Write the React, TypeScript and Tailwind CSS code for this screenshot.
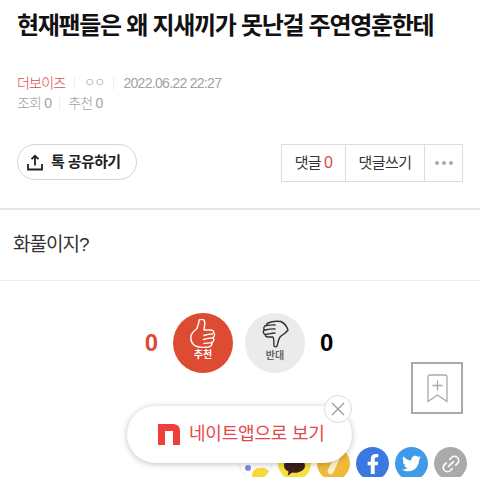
import React from 'react';
import { FaFacebookF, FaTwitter } from 'react-icons/fa';
import { FiLink2 } from 'react-icons/fi';

const font = { fontFamily: '"Liberation Sans", "Noto Sans CJK KR", sans-serif' };

function ShareIcon() {
  return (
    <svg width="16" height="17" viewBox="0 0 16 17" fill="none" stroke="#222" strokeWidth="1.8">
      <path d="M8 11.5V2M4.5 5.2 8 1.8l3.5 3.4M1 10v5.5h14V10" />
    </svg>
  );
}

function ThumbUp() {
  return (
    <svg width="26" height="30" viewBox="0 0 26 30" fill="none" stroke="#fff" strokeWidth="1.4" strokeLinejoin="round" strokeLinecap="round">
      <path d="M9 3C8 5 8 8 6.500 10 4 12 1.500 14 1 17c-.5 4 1 8 4.500 10 3 1.500 9 1.500 13 1 3-.5 4-3 3-4.500 2.500-.5 3-3.500 1.500-5 2-1 2-4 .5-5 .5-1.500-1-2.500-3-2.500H14c0-3 1.500-6 .5-9-.5-2-4.500-2.500-5.500-.5z" />
      <path d="M14 16.500c3-1 6-1.500 8.500-1.500M13.500 20.500c3-1 6-1.500 9.500-1.500M14 24.500c3-.5 5.500-1 8-.5" />
    </svg>
  );
}

function ThumbDown() {
  return (
    <svg width="27" height="28" viewBox="0 0 27 28" fill="none" stroke="#333" strokeWidth="1.4" strokeLinejoin="round" strokeLinecap="round">
      <path d="M6 3c4-2 9-2 13-1.500 3 1.500 6 5.500 7 8.500-2 3-6 5-8 7-1.500 2-2 6-3 9-1 1-2.500 1-3 0-.5-3 .5-6-1-9H6c-2 0-3-1-2.500-2.500C1 14 .5 11 2.500 10 1 8.500 2 5.500 4.500 5.500 4.500 4.500 5 3.500 6 3z" />
      <path d="M4.500 5.500c3-.5 6-1 8.500-.5M2.500 10c3-.5 7-1.500 10.500-1M4 14.500c3-.5 6-1.500 9-1.500" />
    </svg>
  );
}

export default function App() {
  return (
    <div className="relative w-[480px] h-[477px] overflow-hidden bg-white" style={font}>
      <h1 className="pl-[17px] pt-[10px] h-[73px] text-[24px] leading-[32px] font-bold tracking-[-1.3px] text-[#111] whitespace-nowrap">
        현재팬들은 왜 지새끼가 못난걸 주연영훈한테
      </h1>

      <div className="pl-[17px] text-[14px] leading-[20px] tracking-[-0.8px] text-[#a3a3a3] font-light">
        <div className="flex items-center">
          <span className="text-[#dd4b4b]">더보이즈</span>
          <span className="w-px h-[13px] bg-[#eee] mx-[9px]" />
          <span className="text-[12px] tracking-[-1px]">ㅇㅇ</span>
          <span className="w-px h-[13px] bg-[#eee] mx-[9px]" />
          <span className="tracking-[-0.7px]">2022.06.22 22:27</span>
        </div>
        <div className="flex items-center">
          <span>조회 0</span>
          <span className="w-px h-[13px] bg-[#eee] mx-[8px]" />
          <span>추천 0</span>
        </div>
      </div>

      <div className="flex justify-between items-start px-[17px] mt-[31px] h-[64px]">
        <button className="flex items-center gap-[8px] w-[120px] h-[36px] pl-[9px] rounded-full border border-[#d4d4d4] text-[15px] font-bold tracking-[-0.6px] text-[#222]">
          <ShareIcon />
          톡 공유하기
        </button>
        <div className="flex h-[38px] border border-[#ddd] text-[15px] tracking-[-0.6px] text-[#333]">
          <div className="w-[64px] flex items-center justify-center gap-[3px] border-r border-[#ddd]">
            댓글 <span className="text-[#dd4b4b] text-[16px]">0</span>
          </div>
          <div className="w-[79px] flex items-center justify-center border-r border-[#ddd]">댓글쓰기</div>
          <div className="w-[37px] flex items-center justify-center gap-[3px]">
            <span className="w-[4px] h-[4px] rounded-full bg-[#aaa]" />
            <span className="w-[4px] h-[4px] rounded-full bg-[#aaa]" />
            <span className="w-[4px] h-[4px] rounded-full bg-[#aaa]" />
          </div>
        </div>
      </div>

      <div className="h-[73px] border-t-2 border-b border-t-[#e6e6e6] border-b-[#eee] pl-[13px] pt-[21px] text-[19px] leading-[28px] tracking-[-1px] text-[#333]">
        화풀이지?
      </div>

      <div className="flex items-center justify-center mt-[32px] pr-[2px] h-[60px] text-[24px] font-bold">
        <span className="text-[#dd4b32] mr-[15px]">0</span>
        <div className="w-[60px] h-[60px] rounded-full bg-[#dd4b32] flex flex-col items-center justify-start pt-[6px] text-white">
          <ThumbUp />
          <span className="text-[10px] leading-[14px] font-bold -mt-[1px]">추천</span>
        </div>
        <div className="w-[60px] h-[60px] ml-[12px] rounded-full bg-[#ebebeb] flex flex-col items-center justify-start pt-[7px] text-[#666]">
          <ThumbDown />
          <span className="text-[10px] leading-[14px] font-bold mt-[1px]">반대</span>
        </div>
        <span className="text-black ml-[15px]">0</span>
      </div>

      <div className="flex justify-end pr-[17px] -mt-[11px]">
        <div className="w-[52px] h-[52px] border-2 border-[#aaa] flex items-center justify-center">
          <svg width="21" height="29" viewBox="0 0 21 29" fill="none" stroke="#aaa" strokeWidth="1.3">
            <path d="M1 2.500Q1 1 2.500 1h16Q20 1 20 2.500V27.500L10.500 21 1 27.500Z" />
            <path d="M10.500 6.500v10M5.500 11.500h10" />
          </svg>
        </div>
      </div>

      <div className="flex justify-end gap-[6px] pr-[13px] mt-[33px]">
        <span className="relative w-[33px] h-[33px] rounded-full bg-white border border-[#eee] overflow-hidden">
          <span className="absolute left-[12px] top-[20px] w-[18px] h-[14px] rounded-full bg-[#f7d936]" />
          <span className="absolute left-[5px] top-[17px] w-[6px] h-[6px] rounded-full bg-[#7c8fd8]" />
        </span>
        <span className="relative w-[33px] h-[33px] rounded-full bg-[#f5e03c] flex items-center justify-center">
          <svg width="21" height="18" viewBox="0 0 23 19" fill="#3c1e1e" className="mt-[7px]">
            <path d="M11.500 0C5 0 0 3.500 0 8c0 3 2 5 5 6.500L4 19l5-3.500c1 .2 1.500.2 2.500.2 6.500 0 11.500-3.300 11.500-7.700S18 0 11.500 0z" />
          </svg>
        </span>
        <span className="relative w-[33px] h-[33px] rounded-full bg-[#f0b93a] flex items-center justify-center">
          <span className="w-[6px] h-[22px] rounded-full bg-[#fdf0d0] rotate-[25deg]" />
        </span>
        <span className="w-[33px] h-[33px] rounded-full bg-[#3b78e0] flex items-center justify-center text-white">
          <FaFacebookF size={20} />
        </span>
        <span className="w-[33px] h-[33px] rounded-full bg-[#3f9ae8] flex items-center justify-center text-white">
          <FaTwitter size={19} />
        </span>
        <span className="w-[33px] h-[33px] rounded-full bg-[#aaa] flex items-center justify-center text-white">
          <FiLink2 size={20} className="-rotate-45" />
        </span>
      </div>

      {/* floating app banner */}
      <div className="absolute left-[127px] top-[406px] w-[225px] h-[57px] rounded-full bg-white shadow-[0_1px_6px_rgba(0,0,0,0.25)] flex items-center pl-[31px] gap-[9px] text-[#e2474b] text-[18px] tracking-[-0.2px]">
        <svg width="22" height="21" viewBox="0 0 22 21" fill="#ee3f3b">
          <path d="M0 0h15q7 0 7 7v14h-7V7H7v14H0z" />
        </svg>
        네이트앱으로 보기
      </div>
      <div className="absolute left-[324px] top-[395px] w-[28px] h-[28px] rounded-full bg-white border border-[#ddd] flex items-center justify-center">
        <svg width="14" height="14" viewBox="0 0 14 14" stroke="#999" strokeWidth="1.2">
          <path d="M1 1l12 12M13 1 1 13" />
        </svg>
      </div>
    </div>
  );
}
